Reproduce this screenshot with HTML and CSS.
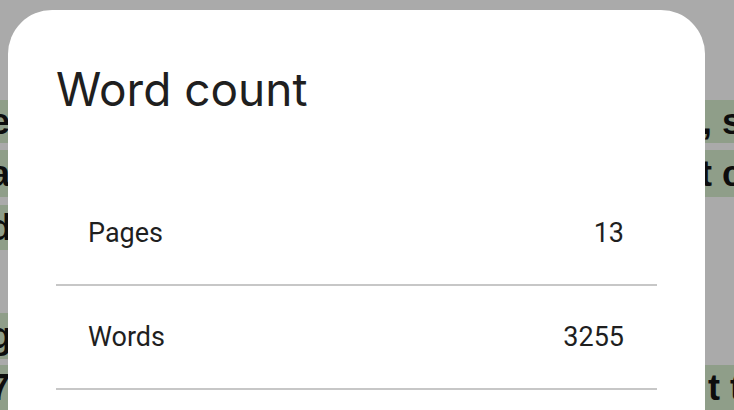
FILE: index.html
```html
<!DOCTYPE html>
<html>
<head>
<meta charset="utf-8">
<link rel="stylesheet" href="styles.css">
</head>
<body>
<div class="backdrop">
  <div class="bands">
    <div class="band g b1"><span class="l">e</span><span class="r">, s</span></div>
    <div class="band g b2"><span class="l">a</span><span class="r">t c</span></div>
    <div class="band g b3 leftonly"><span class="l">d</span></div>
    <div class="band g b4 leftonly"><span class="l">g</span></div>
    <div class="band g b5"><span class="l">7</span><span class="r">t t</span></div>
  </div>
  <div class="dialog">
    <h1 class="title">Word count</h1>
    <div class="list">
      <div class="row"><span>Pages</span><span>13</span></div>
      <div class="row"><span>Words</span><span>3255</span></div>
    </div>
  </div>
</div>
</body>
</html>
```
FILE: styles.css
```css
html, body {
  margin: 0;
  padding: 0;
  width: 734px;
  height: 410px;
  overflow: hidden;
  background: #aaaaaa;
}
.backdrop {
  position: relative;
  width: 734px;
  height: 410px;
}
.bands {
  position: absolute;
  inset: 0;
}
.band {
  position: absolute;
  left: 0;
  right: 0;
  display: flex;
  justify-content: space-between;
  align-items: center;
  font-family: "Liberation Sans", Arial, sans-serif;
  font-weight: 700;
  font-size: 36px;
  color: #0d0d0d;
  overflow: hidden;
}
.band.g { background: #8f9e89; }
.b1 { top: 100px; height: 43px; }
.b2 { top: 150px; height: 47px; }
.b3 { top: 205px; height: 45px; }
.b4 { top: 313px; height: 46px; }
.b5 { top: 365px; height: 45px; }
.leftonly { right: auto; width: 30px; }
.band .l { margin-left: -10px; }
.band .r { margin-right: -8px; white-space: pre; }
.dialog {
  position: absolute;
  left: 8px;
  top: 10px;
  width: 697px;
  height: 460px;
  background: #ffffff;
  border-radius: 44px;
  box-sizing: border-box;
  padding: 53px 48px 0 48px;
}
.title {
  margin: 0;
  font-family: Inter, "Open Sans", sans-serif;
  font-weight: 400;
  font-size: 46px;
  line-height: 52px;
  color: #1f1f1f;
  letter-spacing: 0;
}
.list {
  margin-top: 67px;
}
.row {
  display: flex;
  justify-content: space-between;
  align-items: center;
  height: 102px;
  padding: 0 33px 0 32px;
  border-bottom: 2px solid #c7c7c7;
  font-family: Roboto, sans-serif;
  font-size: 27px;
  color: #1f1f1f;
}
```
